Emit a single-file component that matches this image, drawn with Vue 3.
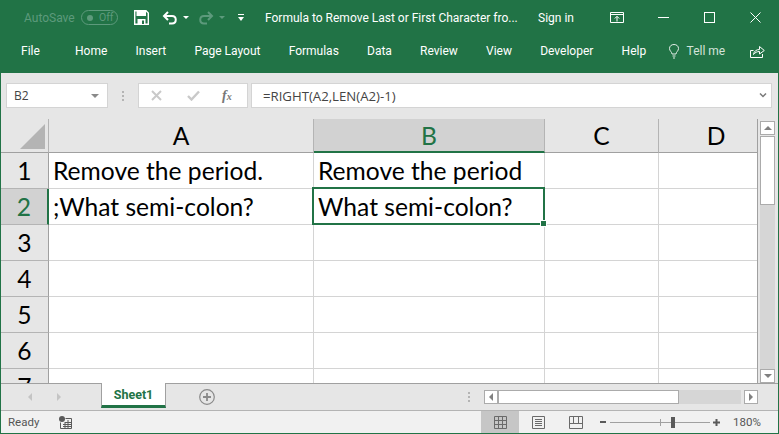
<template>
  <div class="excel">
    <header class="titlebar">
      <span class="autosave">AutoSave</span>
      <span class="toggle"><i class="knob"></i><span>Off</span></span>
      <svg class="qat-save" width="15" height="15" viewBox="0 0 15 15">
        <path d="M0.7 0.7H12L14.3 3V14.3H0.7Z" fill="none" stroke="#fff" stroke-width="1.4" />
        <rect x="2.5" y="1" width="9.5" height="5" fill="#fff" />
        <rect x="3.5" y="9" width="8" height="5.5" fill="#fff" />
        <rect x="8" y="10.5" width="2" height="3.5" fill="#217346" />
      </svg>
      <svg class="qat-undo" width="16" height="14" viewBox="0 0 16 14">
        <path d="M6 1L2 5L6 9M2 5H10C15 5 15 12.5 10 12.5H7" fill="none" stroke="#fff" stroke-width="2" />
      </svg>
      <i class="caret"></i>
      <svg class="qat-redo" width="16" height="14" viewBox="0 0 16 14">
        <path d="M10 1L14 5L10 9M14 5H6C1 5 1 12.5 6 12.5H9" fill="none" stroke="#5d9a7c" stroke-width="2" />
      </svg>
      <i class="caret dim"></i>
      <svg class="qat-more" width="6" height="8" viewBox="0 0 6 8">
        <rect width="6" height="1" fill="#fff" />
        <path d="M0 3H6L3 7Z" fill="#fff" />
      </svg>
      <span class="doc-title">Formula to Remove Last or First Character fro...</span>
      <span class="signin">Sign in</span>
      <svg class="win-ribbon" width="14" height="11" viewBox="0 0 14 11">
        <path d="M0.5 0.5H13.5V10.5H0.5ZM0.5 2.5H13.5M7 9.5V4.5M4.8 6.5L7 4.3L9.2 6.5" fill="none" stroke="#fff" />
      </svg>
      <svg class="win-min" width="11" height="1" viewBox="0 0 11 1"><rect width="11" height="1" fill="#fff" /></svg>
      <svg class="win-max" width="11" height="11" viewBox="0 0 11 11">
        <rect x="0.5" y="0.5" width="10" height="10" fill="none" stroke="#fff" />
      </svg>
      <svg class="win-close" width="11" height="11" viewBox="0 0 11 11">
        <path d="M0.5 0.5L10.5 10.5M10.5 0.5L0.5 10.5" stroke="#fff" />
      </svg>
    </header>

    <nav class="ribbon-tabs">
      <span v-for="tab in tabs" :key="tab">{{ tab }}</span>
      <svg class="bulb" width="10" height="15" viewBox="0 0 10 15">
        <path d="M3 10C3 8 0.5 7 0.5 4.5C0.5 2 2.5 0.5 5 0.5C7.5 0.5 9.5 2 9.5 4.5C9.5 7 7 8 7 10ZM3.5 12H6.5M4 14H6" fill="none" stroke="#e4eee9" />
      </svg>
      <span class="tellme">Tell me</span>
      <svg class="share" width="15" height="13" viewBox="0 0 15 13">
        <path d="M3.5 5.5H0.5V12.5H12.5V9M3.5 9.5C4 6 6.5 4.5 9.5 4.5V1.5L14.3 5.5L9.5 9V6.5C7 6.5 5 7.5 3.5 9.5Z" fill="none" stroke="#fff" />
      </svg>
    </nav>

    <section class="formula-bar">
      <div class="name-box">
        <span>B2</span>
        <i class="down-caret"></i>
      </div>
      <div class="grip"><i></i><i></i><i></i></div>
      <div class="fx-box">
        <svg width="11" height="11" viewBox="0 0 11 11">
          <path d="M1 1L10 10M10 1L1 10" stroke="#c9c9c9" stroke-width="2" />
        </svg>
        <svg width="13" height="11" viewBox="0 0 13 11">
          <path d="M1 6L4.5 9.5L12 1.5" fill="none" stroke="#c9c9c9" stroke-width="2.4" />
        </svg>
        <span class="fx">f<small>x</small></span>
      </div>
      <div class="formula-input">
        <span>=RIGHT(A2,LEN(A2)-1)</span>
        <svg width="8" height="5" viewBox="0 0 8 5">
          <path d="M1 0.5L4 3.5L7 0.5" fill="none" stroke="#7a7a7a" stroke-width="1.5" />
        </svg>
      </div>
    </section>

    <section class="sheet">
      <div class="grid-view">
        <div class="grid">
          <div class="corner"><i></i></div>
          <div v-for="col in cols" :key="col" class="col-head" :class="{ active: col === 'B' }">{{ col }}</div>
          <template v-for="row in rows" :key="row.n">
            <div class="row-head" :class="{ active: row.n === 2 }">{{ row.n }}</div>
            <div v-for="(val, i) in row.cells" :key="i" class="cell">{{ val }}</div>
          </template>
        </div>
        <div class="selection"><i class="handle"></i></div>
      </div>
      <div class="vscroll">
        <div class="sb-btn"><i class="tri up"></i></div>
        <div class="v-thumb"></div>
        <div class="v-track"></div>
        <div class="sb-btn"><i class="tri down"></i></div>
      </div>
    </section>

    <section class="sheet-tabs">
      <i class="nav-tri left"></i>
      <i class="nav-tri right"></i>
      <div class="sheet-tab">Sheet1</div>
      <svg class="add" width="16" height="16" viewBox="0 0 16 16">
        <circle cx="8" cy="8" r="7.3" fill="none" stroke="#8a8a8a" stroke-width="1.2" />
        <path d="M8 4V12M4 8H12" stroke="#8a8a8a" stroke-width="1.8" />
      </svg>
      <div class="grip tabs-grip"><i></i><i></i><i></i></div>
      <div class="hscroll">
        <div class="sb-btn h"><i class="tri lft"></i></div>
        <div class="h-thumb"></div>
        <div class="h-track"></div>
        <div class="sb-btn h"><i class="tri rgt"></i></div>
      </div>
    </section>

    <footer class="statusbar">
      <span class="ready">Ready</span>
      <svg class="macro" width="13" height="13" viewBox="0 0 13 13">
        <circle cx="3" cy="3" r="3" fill="#5a5a5a" />
        <path d="M1.5 6.5V12.5H12.5V2.5H6.5M4 8.5H12M4 10.5H12M6 6.5H12M6 6V12.5M9 4V12.5" fill="none" stroke="#5a5a5a" />
      </svg>
      <div class="views">
        <div class="view active">
          <svg width="13" height="13" viewBox="0 0 13 13">
            <path d="M0.5 0.5H12.5V12.5H0.5ZM4.5 0.5V12.5M8.5 0.5V12.5M0.5 4.5H12.5M0.5 8.5H12.5" fill="none" stroke="#6a6a6a" />
          </svg>
        </div>
        <div class="view">
          <svg width="13" height="13" viewBox="0 0 13 13">
            <path d="M0.5 0.5H12.5V12.5H0.5ZM3 3.5H10M3 5.5H10M3 7.5H10M3 9.5H10" fill="none" stroke="#6a6a6a" />
          </svg>
        </div>
        <div class="view">
          <svg width="14" height="13" viewBox="0 0 14 13">
            <path d="M0.5 0.5H13.5V12.5H0.5ZM0.5 7.5H13.5M4.5 0.5V7.5M9.5 0.5V7.5" fill="none" stroke="#6a6a6a" />
          </svg>
        </div>
      </div>
      <i class="zoom-minus"></i>
      <div class="zoom-slider"><i class="tick"></i><i class="thumb"></i></div>
      <svg class="zoom-plus" width="7" height="7" viewBox="0 0 7 7">
        <path d="M3.5 0V7M0 3.5H7" stroke="#5a5a5a" stroke-width="2" />
      </svg>
      <span class="zoom-val">180%</span>
    </footer>
  </div>
</template>

<script setup>
const tabs = ['File', 'Home', 'Insert', 'Page Layout', 'Formulas', 'Data', 'Review', 'View', 'Developer', 'Help']
const cols = ['A', 'B', 'C', 'D']
const rows = [
  { n: 1, cells: ['Remove the period.', 'Remove the period', '', ''] },
  { n: 2, cells: [';What semi-colon?', 'What semi-colon?', '', ''] },
  { n: 3, cells: ['', '', '', ''] },
  { n: 4, cells: ['', '', '', ''] },
  { n: 5, cells: ['', '', '', ''] },
  { n: 6, cells: ['', '', '', ''] },
  { n: 7, cells: ['', '', '', ''] },
]
</script>

<style>
html, body {
  margin: 0;
  overflow: hidden;
}
</style>

<style scoped>
.excel {
  width: 779px;
  height: 434px;
  box-sizing: border-box;
  border: 1px solid #217346;
  border-top: none;
  display: flex;
  flex-direction: column;
  overflow: hidden;
  font-family: "Roboto", "Open Sans", sans-serif;
  background: #e6e6e6;
}

/* title bar */
.titlebar {
  height: 35px;
  flex: none;
  background: #217346;
  color: #fff;
  display: flex;
  align-items: center;
  font-size: 12px;
  padding-left: 23px;
}
.autosave {
  color: #5d9a7c;
  width: 57px;
}
.toggle {
  width: 37px;
  height: 15px;
  box-sizing: border-box;
  border: 1px solid #5d9a7c;
  border-radius: 8px;
  color: #5d9a7c;
  font-size: 10.5px;
  display: flex;
  align-items: center;
  padding-left: 5px;
  gap: 6px;
}
.knob {
  width: 6px;
  height: 6px;
  border-radius: 50%;
  background: #5d9a7c;
}
.qat-save {
  margin-left: 16px;
}
.qat-undo {
  margin-left: 13px;
}
.caret {
  width: 0;
  height: 0;
  border: 3px solid transparent;
  border-top: 3px solid #fff;
  border-bottom: none;
  margin-left: 5px;
}
.caret.dim {
  border-top-color: #5d9a7c;
}
.qat-redo {
  margin-left: 9px;
}
.qat-more {
  margin-left: 13px;
}
.doc-title {
  margin-left: 21px;
  width: 273px;
  white-space: nowrap;
}
.signin {
  width: 36px;
  white-space: nowrap;
}
.win-ribbon {
  margin-left: 36px;
}
.win-min {
  margin-left: 34px;
}
.win-max {
  margin-left: 35px;
}
.win-close {
  margin-left: 35px;
}

/* ribbon tabs */
.ribbon-tabs {
  height: 38px;
  flex: none;
  box-sizing: border-box;
  padding: 0 0 6px 20px;
  background: #217346;
  color: #fff;
  font-size: 12px;
  display: flex;
  align-items: center;
  gap: 28.2px;
  white-space: nowrap;
}
.ribbon-tabs span:first-child {
  margin-right: 7px;
}
.bulb {
  margin-left: -5px;
}
.tellme {
  margin-left: -21px;
  color: #d3e3da;
}
.share {
  margin-left: -3px;
}

/* formula bar */
.formula-bar {
  height: 46px;
  flex: none;
  box-sizing: border-box;
  padding: 10px 6px 11px 5px;
  display: flex;
  color: #444;
  font-size: 12px;
}
.name-box {
  width: 102px;
  box-sizing: border-box;
  background: #fff;
  border: 1px solid #d4d4d4;
  display: flex;
  align-items: center;
  justify-content: space-between;
  padding: 0 8px 0 7px;
  font-family: "Open Sans", sans-serif;
}
.down-caret {
  width: 0;
  height: 0;
  border: 4px solid transparent;
  border-top: 4px solid #8a8a8a;
  border-bottom: none;
}
.grip {
  display: flex;
  flex-direction: column;
  gap: 2px;
  width: 30px;
  align-items: center;
  justify-content: center;
}
.grip i {
  width: 2px;
  height: 2px;
  background: #b4b4b4;
}
.fx-box {
  width: 110px;
  box-sizing: border-box;
  background: #fff;
  border: 1px solid #d4d4d4;
  display: flex;
  align-items: center;
  gap: 25px;
  padding-left: 12px;
}
.fx {
  font-family: "Liberation Serif", serif;
  font-style: italic;
  font-weight: 700;
  font-size: 14px;
  color: #777;
  margin-left: -3px;
}
.fx small {
  font-size: 10px;
}
.formula-input {
  flex: 1;
  margin-left: 3px;
  box-sizing: border-box;
  background: #fff;
  border: 1px solid #d4d4d4;
  display: flex;
  align-items: center;
  justify-content: space-between;
  padding: 0 4px 0 11px;
  font-family: "Open Sans", sans-serif;
  font-size: 13.2px;
}

/* sheet */
.sheet {
  height: 264px;
  flex: none;
  display: flex;
}
.grid-view {
  width: 757px;
  box-sizing: border-box;
  border-right: 1px solid #a0a0a0;
  position: relative;
  overflow: hidden;
  flex: none;
}
.grid {
  display: grid;
  grid-template-columns: 48px 265px 231px 114px 115px;
  grid-template-rows: 34px repeat(7, 36px);
  background: #fff;
  font-family: "Lato", "Open Sans", sans-serif;
  color: #000;
}
.corner {
  background: #e6e6e6;
  border-right: 1px solid #b4b4b4;
  border-bottom: 1px solid #a0a0a0;
  box-sizing: border-box;
  display: flex;
  align-items: flex-end;
  justify-content: flex-end;
  padding: 0 3px 3px 0;
}
.corner i {
  width: 0;
  height: 0;
  border-style: solid;
  border-width: 0 0 25px 25px;
  border-color: transparent transparent #b4b4b4 transparent;
}
.col-head {
  background: #e6e6e6;
  box-sizing: border-box;
  border-right: 1px solid #b4b4b4;
  border-bottom: 1px solid #a0a0a0;
  display: flex;
  align-items: center;
  justify-content: center;
  font-size: 24.6px;
}
.col-head.active {
  background: #d2d2d2;
  color: #217346;
  border-bottom: 2px solid #217346;
}
.row-head {
  background: #e6e6e6;
  box-sizing: border-box;
  border-right: 1px solid #a0a0a0;
  border-bottom: 1px solid #b4b4b4;
  display: flex;
  align-items: center;
  justify-content: center;
  font-size: 24.6px;
}
.row-head.active {
  background: #d2d2d2;
  color: #217346;
  border-right: 2px solid #217346;
}
.cell {
  box-sizing: border-box;
  border-right: 1px solid #d4d4d4;
  border-bottom: 1px solid #d4d4d4;
  font-size: 24.6px;
  display: flex;
  align-items: center;
  padding-left: 4px;
  white-space: nowrap;
  overflow: hidden;
}
.selection {
  position: absolute;
  left: 311px;
  top: 68px;
  width: 233px;
  height: 38px;
  box-sizing: border-box;
  border: 2px solid #217346;
}
.handle {
  position: absolute;
  right: -4px;
  bottom: -4px;
  width: 5px;
  height: 5px;
  background: #217346;
  border: 1px solid #fff;
}

/* scrollbars */
.vscroll {
  margin-left: 2px;
  width: 15px;
  padding-top: 2px;
  display: flex;
  flex-direction: column;
}
.sb-btn {
  width: 15px;
  height: 14px;
  flex: none;
  box-sizing: border-box;
  background: #fff;
  border: 1px solid #ababab;
  display: flex;
  align-items: center;
  justify-content: center;
}
.sb-btn.h {
  width: 14px;
}
.tri {
  width: 0;
  height: 0;
  border: 4px solid transparent;
}
.tri.up {
  border-top: none;
  border-bottom: 4px solid #808080;
}
.tri.down {
  border-bottom: none;
  border-top: 4px solid #808080;
}
.tri.lft {
  border-left: none;
  border-right: 4px solid #808080;
}
.tri.rgt {
  border-right: none;
  border-left: 4px solid #808080;
}
.v-thumb {
  height: 69px;
  flex: none;
  margin-top: 1px;
  box-sizing: border-box;
  background: #fff;
  border: 1px solid #ababab;
}
.v-track {
  flex: 1;
  background: #d6d6d6;
}

/* sheet tabs */
.sheet-tabs {
  height: 28px;
  flex: none;
  box-sizing: border-box;
  border-top: 1px solid #a0a0a0;
  border-bottom: 1px solid #b4b4b4;
  display: flex;
  align-items: center;
}
.nav-tri {
  width: 0;
  height: 0;
  border: 4px solid transparent;
}
.nav-tri.left {
  margin-left: 27px;
  border-left: none;
  border-right: 4px solid #c4c4c4;
}
.nav-tri.right {
  margin-left: 25px;
  border-right: none;
  border-left: 4px solid #c4c4c4;
}
.sheet-tab {
  align-self: flex-start;
  margin-top: -1px;
  margin-left: 40px;
  width: 65px;
  height: 25px;
  box-sizing: border-box;
  background: #fff;
  border: 1px solid #a0a0a0;
  border-top: none;
  border-bottom: 3px solid #217346;
  color: #217346;
  font-weight: 700;
  font-size: 12.5px;
  text-align: center;
  line-height: 23px;
}
.add {
  margin-left: 33px;
}
.tabs-grip {
  width: 3px;
  margin-left: 252px;
}
.hscroll {
  display: flex;
  height: 14px;
  margin-left: 14px;
}
.h-thumb {
  width: 181px;
  box-sizing: border-box;
  background: #fff;
  border: 1px solid #ababab;
}
.h-track {
  width: 62px;
  background: #d6d6d6;
  margin-right: 3px;
}

/* status bar */
.statusbar {
  flex: 1;
  background: #f1f1f1;
  display: flex;
  align-items: center;
  color: #555;
  font-size: 11.5px;
}
.ready {
  margin-left: 7px;
  width: 51px;
}
.views {
  margin-left: 409px;
  display: flex;
  align-self: stretch;
}
.view {
  width: 38px;
  display: flex;
  align-items: center;
  justify-content: center;
}
.view.active {
  background: #c6c6c6;
}
.zoom-minus {
  width: 6px;
  height: 2px;
  background: #5a5a5a;
  margin-left: 5px;
}
.zoom-slider {
  width: 100px;
  height: 1px;
  background: #a0a0a0;
  margin-left: 4px;
  position: relative;
}
.tick {
  position: absolute;
  left: 50px;
  top: -3px;
  width: 1px;
  height: 7px;
  background: #a0a0a0;
}
.thumb {
  position: absolute;
  left: 61px;
  top: -5px;
  width: 4px;
  height: 11px;
  background: #5a5a5a;
}
.zoom-plus {
  margin-left: 3px;
}
.zoom-val {
  margin-left: 13px;
}
</style>
